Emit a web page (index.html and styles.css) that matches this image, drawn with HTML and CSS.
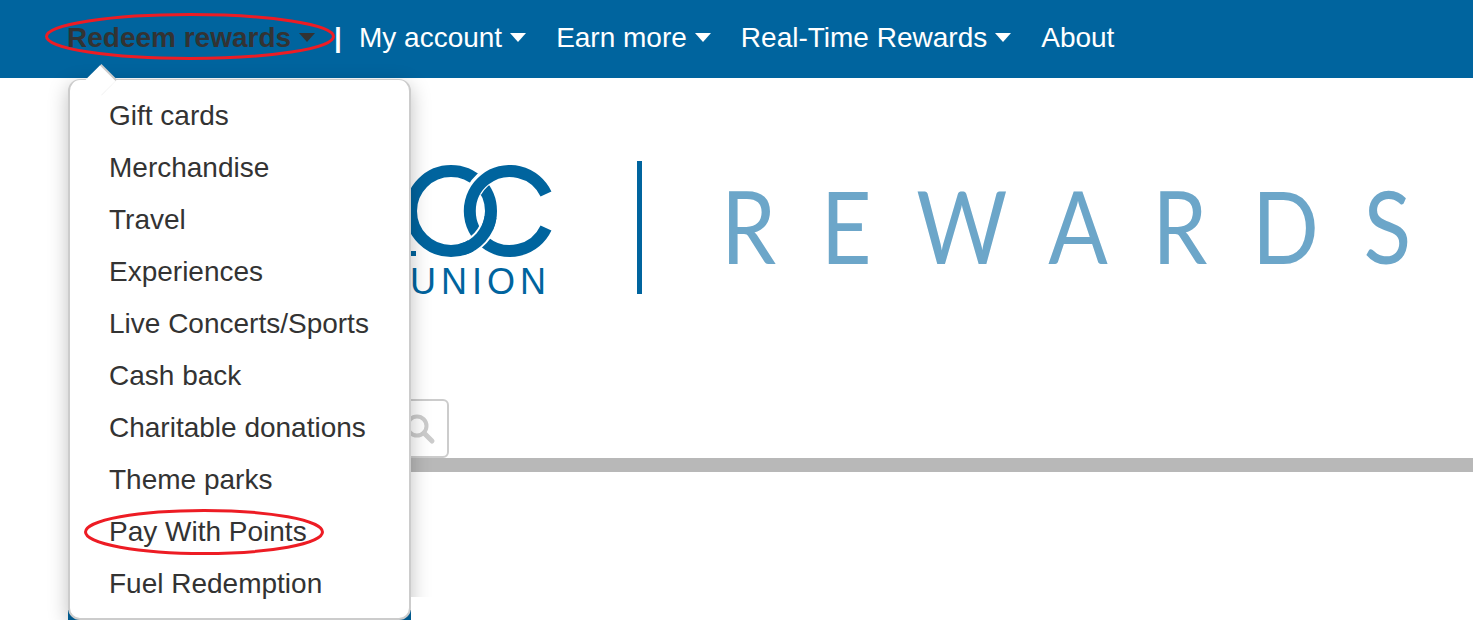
FILE: index.html
```html
<!DOCTYPE html>
<html lang="en">
<head>
    <meta charset="UTF-8">
    <title>Rewards</title>
    <link rel="stylesheet" href="styles.css">
</head>
<body>
    <nav class="navbar">
        <a class="nav-link nav-link-active" href="#">Redeem rewards <span class="caret"></span></a>
        <span class="nav-sep">|</span>
        <a class="nav-link" href="#">My account <span class="caret"></span></a>
        <a class="nav-link" href="#">Earn more <span class="caret"></span></a>
        <a class="nav-link" href="#">Real-Time Rewards <span class="caret"></span></a>
        <a class="nav-link" href="#">About</a>
    </nav>

    <header class="brand">
        <div class="brand-mark">
            <svg class="brand-rings" width="150" height="100" viewBox="0 0 150 100">
                <circle cx="49" cy="46" r="40" fill="none" stroke="#00649e" stroke-width="12"/>
                <path d="M92 8 A40 40 0 0 0 72 26" fill="none" stroke="#fff" stroke-width="16"/>
                <path d="M144 29 A40 40 0 1 0 144 63" fill="none" stroke="#00649e" stroke-width="12"/>
                <path d="M85.25 62.9 A40 40 0 0 1 69 80.6" fill="none" stroke="#fff" stroke-width="16"/>
                <path d="M88.5 52 A40 40 0 0 1 60 84.5" fill="none" stroke="#00649e" stroke-width="12"/>
                <rect x="9" y="86" width="5" height="5" fill="#00649e"/>
            </svg>
            <span class="brand-union">UNION</span>
        </div>
        <div class="brand-rule"></div>
        <div class="brand-name">REWARDS</div>
    </header>

    <div class="search-row">
        <button class="search-btn">
            <svg width="32" height="32" viewBox="0 0 32 32">
                <circle cx="13" cy="13" r="9.5" fill="none" stroke="#ccc" stroke-width="4"/>
                <path d="M20 20 L28 28" stroke="#ccc" stroke-width="5" stroke-linecap="round"/>
            </svg>
        </button>
    </div>
    <div class="divider"></div>

    <div class="foot-strip"></div>

    <div class="dropdown">
        <a href="#">Gift cards</a>
        <a href="#">Merchandise</a>
        <a href="#">Travel</a>
        <a href="#">Experiences</a>
        <a href="#">Live Concerts/Sports</a>
        <a href="#">Cash back</a>
        <a href="#">Charitable donations</a>
        <a href="#">Theme parks</a>
        <a href="#">Pay With Points</a>
        <a href="#">Fuel Redemption</a>
    </div>

    <div class="foot-cover"></div>

    <!-- hand drawn red marks -->
    <svg class="mark mark-nav" width="292" height="48" viewBox="0 0 292 48">
        <ellipse cx="145" cy="23.5" rx="143.5" ry="22" fill="none" stroke="#ed1c24" stroke-width="3"/>
    </svg>
    <svg class="mark mark-item" width="242" height="48" viewBox="0 0 242 48">
        <ellipse cx="120" cy="23" rx="118.5" ry="21.5" fill="none" stroke="#ed1c24" stroke-width="3"/>
    </svg>
</body>
</html>
```

FILE: styles.css
```css
* {
    margin: 0;
    padding: 0;
    box-sizing: border-box;
}

html, body {
    height: 620px;
    overflow: hidden;
}

body {
    position: relative;
    background: #fff;
    color: #333;
    font-family: "Liberation Sans", Arial, sans-serif;
}

a {
    color: inherit;
    text-decoration: none;
}

/* Top bar */
.navbar {
    display: flex;
    align-items: center;
    height: 78px;
    padding: 0 0 3px 67px;
    background: #00649e;
    color: #fff;
    font-size: 28px;
}

.nav-link {
    display: flex;
    align-items: center;
    gap: 8px;
    margin-right: 30px;
    white-space: nowrap;
}

.nav-link-active {
    margin-right: 19px;
    color: #333;
    font-weight: bold;
}

.nav-sep {
    margin-right: 17px;
    font-weight: bold;
}

.caret {
    width: 0;
    height: 0;
    border-left: 8.5px solid transparent;
    border-right: 8.5px solid transparent;
    border-top: 9px solid currentColor;
}

/* Dropdown */
.dropdown {
    position: absolute;
    top: 79px;
    left: 68px;
    display: flex;
    flex-direction: column;
    width: 343px;
    height: 541px;
    padding: 10px 0 0 39px;
    background: #fff;
    border: 2px solid #ccc;
    border-top-width: 1px;
    border-radius: 12px;
    box-shadow: 0 6px 20px rgba(0,0,0,0.25);
    font-size: 28px;
}

.dropdown::before {
    content: '';
    position: absolute;
    top: -10px;
    left: 19px;
    width: 22px;
    height: 22px;
    background: #fff;
    box-shadow: 0 -2px 0 #ccc;
    transform: rotate(45deg);
}

.dropdown a {
    position: relative;
    height: 52px;
    line-height: 52px;
    white-space: nowrap;
}

.foot-strip {
    position: absolute;
    top: 610px;
    left: 68px;
    width: 343px;
    height: 10px;
    background: #00649e;
}

.foot-cover {
    position: absolute;
    top: 597px;
    left: 411px;
    width: 40px;
    height: 23px;
    background: #fff;
}

/* Logo */
.brand {
    display: flex;
    align-items: flex-start;
    height: 321px;
    padding: 83px 0 0 402px;
}

.brand-mark {
    position: relative;
    flex-shrink: 0;
    width: 150px;
    height: 140px;
    margin-top: 4px;
}

.brand-rings {
    display: block;
}

.brand-union {
    position: absolute;
    top: 99px;
    right: 1px;
    color: #00649e;
    font-size: 36px;
    line-height: 1;
    letter-spacing: 5px;
}

.brand-rule {
    flex-shrink: 0;
    width: 5px;
    height: 133px;
    margin: 0 79px 0 85px;
    background: #00649e;
}

.brand-name {
    flex-shrink: 0;
    margin-top: 14px;
    color: #6ca6c9;
    font-family: Lato, sans-serif;
    font-size: 100px;
    line-height: 1;
    letter-spacing: 50.7px;
    white-space: nowrap;
    transform: scaleX(0.88);
    transform-origin: left top;
}

/* Search */
.search-row {
    height: 59px;
    padding-left: 390px;
}

.search-btn {
    display: flex;
    align-items: center;
    justify-content: center;
    width: 59px;
    height: 59px;
    background: #fff;
    border: 2px solid #ccc;
    border-radius: 6px;
}

.divider {
    height: 14px;
    margin-left: 300px;
    background: #b8b8b8;
}

/* Red marks */
.mark {
    position: absolute;
}

.mark-nav {
    top: 13px;
    left: 45px;
}

.mark-item {
    top: 509px;
    left: 84px;
}
```
